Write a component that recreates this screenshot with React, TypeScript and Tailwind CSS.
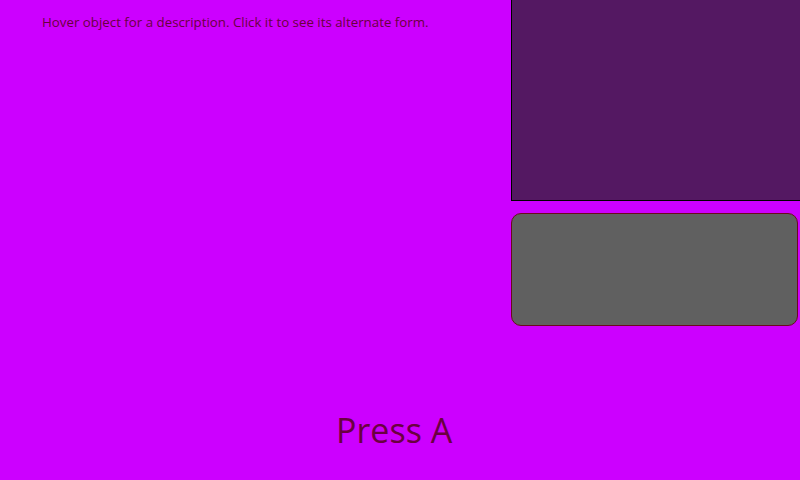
export default function App() {
  return (
    <div
      className="relative flex h-[480px] w-[800px] overflow-hidden bg-[#cc00ff] text-[#6a0040]"
      style={{ fontFamily: '"Open Sans", "Noto Sans", sans-serif' }}
    >
      {/* left: hint + prompt */}
      <div className="flex w-[511px] flex-col">
        <p className="pl-[42px] pt-[13px] text-[13.3px] leading-[18px] whitespace-nowrap">
          Hover object for a description. Click it to see its alternate form.
        </p>
        <div className="flex-1" />
        <p className="mb-[28px] ml-[336px] text-[34px] leading-[44px] whitespace-nowrap">Press A</p>
      </div>

      {/* right: detail panels */}
      <div className="flex w-[289px] flex-col">
        <div className="h-[201px] border-b border-l border-black bg-[#541862]" />
        <div className="mt-[12px] mr-[2px] h-[113px] rounded-[10px] border border-[#6b0a1e] bg-[#606060]" />
      </div>
    </div>
  );
}
